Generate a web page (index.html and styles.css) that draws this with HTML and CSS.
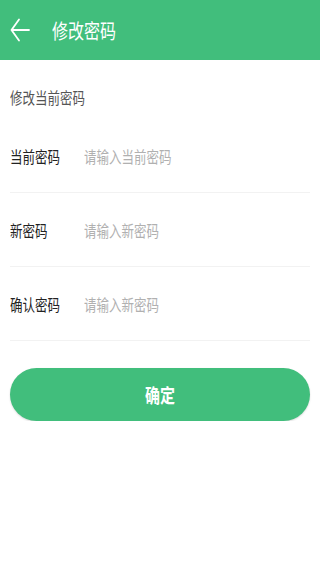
FILE: index.html
```html
<!DOCTYPE html>
<html lang="zh-CN">
<head>
    <meta charset="UTF-8">
    <meta name="viewport" content="width=device-width, initial-scale=1.0">
    <link rel="stylesheet" href="styles.css">
</head>
<body>
    <div id="header">
        <a href="#" id="back">
            <svg width="20" height="24" viewBox="0 0 20 24">
                <path d="M9 1.5 L1.5 12 L9 22.5 M1.5 12 H19" fill="none" stroke="#ffffff" stroke-width="1.8" stroke-linecap="round" stroke-linejoin="round"/>
            </svg>
        </a>
        <span id="title" class="tall">修改密码</span>
    </div>
    <div class="section-title"><span class="tall">修改当前密码</span></div>
    <form id="pwd-form">
        <div class="row">
            <label class="tall">当前密码</label>
            <input type="password" class="tall" placeholder="请输入当前密码">
        </div>
        <div class="row">
            <label class="tall">新密码</label>
            <input type="password" class="tall" placeholder="请输入新密码">
        </div>
        <div class="row">
            <label class="tall">确认密码</label>
            <input type="password" class="tall" placeholder="请输入新密码">
        </div>
        <button id="ok-button" type="button"><span class="tall">确定</span></button>
    </form>
</body>
</html>
```

FILE: styles.css
```css
body {
    margin: 0;
    background-color: #ffffff;
    font-family: "Noto Sans CJK SC", "Noto Sans", sans-serif;
}
.tall {
    display: inline-block;
    transform: scaleY(1.3);
}
#header {
    height: 60px;
    background-color: #41be7c;
    display: flex;
    align-items: center;
    padding-left: 10px;
}
#back {
    display: flex;
    width: 42px;
}
#title {
    color: #ffffff;
    font-size: 16px;
    line-height: 20px;
}
.section-title {
    padding: 27px 10px 12px;
    font-size: 12.5px;
    line-height: 20px;
    color: #555555;
}
.row {
    display: flex;
    align-items: center;
    height: 73px;
    margin: 0 10px;
    border-bottom: 1px solid #f2f2f2;
}
.row label {
    width: 74px;
    font-size: 12.5px;
    color: #222222;
}
.row input {
    flex: 1;
    border: none;
    outline: none;
    padding: 0;
    font-family: inherit;
    font-size: 12.5px;
    color: #333333;
}
.row input::placeholder {
    color: #b0b0b0;
}
#ok-button {
    display: block;
    width: 300px;
    height: 53px;
    margin: 27px 10px 0;
    border: none;
    border-radius: 27px;
    background-color: #41be7c;
    color: #ffffff;
    font-family: inherit;
    font-size: 15px;
    font-weight: bold;
    box-shadow: 0 1px 2px rgba(0, 0, 0, 0.15);
    cursor: pointer;
}
```
